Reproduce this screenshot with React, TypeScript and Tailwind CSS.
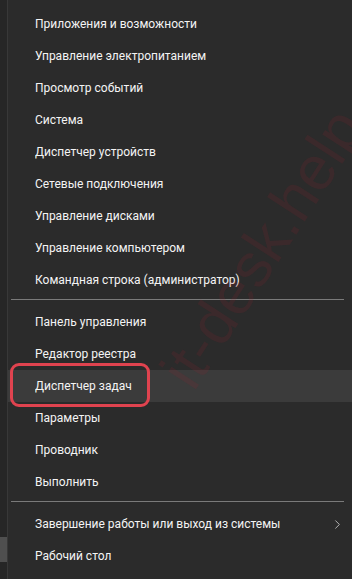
import { ChevronRight } from 'lucide-react'

type Item = { label: string; active?: boolean; submenu?: boolean }

const groups: Item[][] = [
  [
    { label: 'Приложения и возможности' },
    { label: 'Управление электропитанием' },
    { label: 'Просмотр событий' },
    { label: 'Система' },
    { label: 'Диспетчер устройств' },
    { label: 'Сетевые подключения' },
    { label: 'Управление дисками' },
    { label: 'Управление компьютером' },
    { label: 'Командная строка (администратор)' },
  ],
  [
    { label: 'Панель управления' },
    { label: 'Редактор реестра' },
    { label: 'Диспетчер задач', active: true },
    { label: 'Параметры' },
    { label: 'Проводник' },
    { label: 'Выполнить' },
  ],
  [
    { label: 'Завершение работы или выход из системы', submenu: true },
    { label: 'Рабочий стол' },
  ],
]

function MenuRow({ item }: { item: Item }) {
  return (
    <div
      className={
        'relative flex h-8 items-center pl-[27px] pr-[7px] ' +
        (item.active ? 'bg-[#3b3b3b]' : '')
      }
    >
      <span className="flex-1 truncate">{item.label}</span>
      {item.submenu && <ChevronRight size={15} strokeWidth={1.25} className="text-[#d6d6d6]" />}
      {item.active && (
        <div className="pointer-events-none absolute -top-[7px] left-[2px] h-[44px] w-[140px] rounded-[9px] border-[3px] border-[#e0434f]" />
      )}
    </div>
  )
}

export default function App() {
  return (
    <div
      className="relative flex h-[579px] w-[352px] overflow-hidden bg-[#2b2b2b] text-[12px] text-[#f4f4f4] antialiased"
      style={{ fontFamily: 'Roboto, "Noto Sans", sans-serif' }}
    >
      <div className="flex w-[7px] flex-col bg-[#262626]">
        <div className="mt-[537px] h-[25px] bg-[#4f4f4f]" />
      </div>
      <div className="flex flex-1 flex-col border-l border-[#383838] pt-[8px]">
        {groups.map((group, gi) => (
          <div key={gi}>
            {gi > 0 && (
              <div className="pb-[6px] pl-[3px] pr-[8px] pt-[3px]">
                <div className="h-px bg-[#7a7a7a]" />
              </div>
            )}
            {group.map((item) => (
              <MenuRow key={item.label} item={item} />
            ))}
          </div>
        ))}
      </div>

      {/* watermark */}
      <div
        className="pointer-events-none absolute left-[262px] top-[248px] -translate-x-1/2 -translate-y-1/2 -rotate-[57deg] whitespace-nowrap text-[62px] text-[#9a1f2c]/15"
        style={{ fontFamily: '"Liberation Sans", sans-serif' }}
      >
        it-desk.help
      </div>
    </div>
  )
}
